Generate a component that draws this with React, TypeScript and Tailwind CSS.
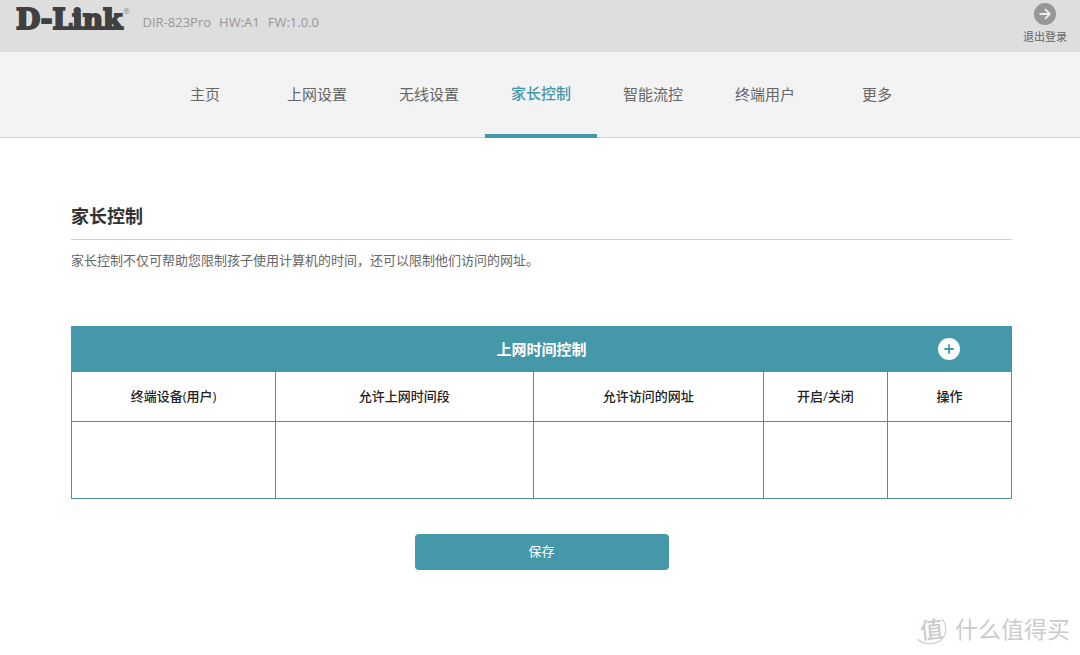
const navItems = ['主页', '上网设置', '无线设置', '家长控制', '智能流控', '终端用户', '更多'];
const activeItem = '家长控制';

const columns = [
  { label: '终端设备(用户)', width: 'w-[21.7%]' },
  { label: '允许上网时间段', width: 'w-[27.4%]' },
  { label: '允许访问的网址', width: 'w-[24.5%]' },
  { label: '开启/关闭', width: 'w-[13.2%]' },
  { label: '操作', width: 'w-[13.2%]' },
];

function Header() {
  return (
    <header className="flex h-[52px] items-start justify-between bg-[#dedede] pr-[13px] pl-4">
      <div className="flex">
        <a href="#home" className="flex font-['DejaVu_Serif',serif] font-bold text-[#404040]">
          <span className="text-[28px] leading-10 [-webkit-text-stroke:2px_#404040]">D-Link</span>
          <sup className="top-0 pt-2 text-[8px] leading-2 font-normal text-[#777777]">®</sup>
        </a>
        <p className="flex gap-2 pt-3 pl-3 text-[13px] leading-5 text-[#979797]">
          <span>DIR-823Pro</span>
          <span>HW:A1</span>
          <span>FW:1.0.0</span>
        </p>
      </div>
      <button type="button" className="flex flex-col items-center pt-[3px] text-[11px] leading-4 text-[#666666]">
        <svg viewBox="0 0 22 22" className="mb-1 size-[22px]" aria-hidden="true">
          <circle cx="11" cy="11" r="11" fill="#979797" />
          <path d="M5.500 11h10.500M11 6.2 15.800 11l-4.800 4.800" fill="none" stroke="#eeeeee" strokeWidth="1.8" />
        </svg>
        退出登录
      </button>
    </header>
  );
}

function Navigation() {
  return (
    <nav className="flex h-[86px] justify-center border-b border-[#d2d2d2] bg-[#f3f3f3] pl-0.5">
      {navItems.map((item) => (
        <a
          key={item}
          href={`#${item}`}
          aria-current={item === activeItem ? 'page' : undefined}
          className={
            item === activeItem
              ? '-mb-px flex w-28 items-center justify-center border-b-4 border-[#4598a9] text-[15px] font-medium text-[#4598a9]'
              : 'flex w-28 items-center justify-center text-[15px] text-[#666666]'
          }
        >
          {item}
        </a>
      ))}
    </nav>
  );
}

function ScheduleTable() {
  return (
    <table className="w-full table-fixed border-collapse border border-[#4f91a0]">
      <colgroup>
        {columns.map((column) => (
          <col key={column.label} className={column.width} />
        ))}
      </colgroup>
      <thead>
        <tr className="h-[45px] bg-[#4598a9] text-white">
          <th colSpan={5} className="border border-[#4598a9] p-0">
            <div className="grid grid-cols-[13.2%_1fr_13.2%] items-center">
              <span className="col-start-2 text-[15px] font-bold">上网时间控制</span>
              <button type="button" aria-label="添加" className="justify-self-center">
                <svg viewBox="0 0 22 22" className="size-[22px]" aria-hidden="true">
                  <circle cx="11" cy="11" r="11" fill="#ffffff" />
                  <path d="M6.3 11h9.4M11 6.3v9.4" stroke="#4598a9" strokeWidth="1.8" />
                </svg>
              </button>
            </div>
          </th>
        </tr>
        <tr className="h-[50px]">
          {columns.map((column) => (
            <th key={column.label} className="border border-[#4f91a0] p-0 text-[13px] font-medium text-[#222222]">
              {column.label}
            </th>
          ))}
        </tr>
      </thead>
      <tbody>
        <tr className="h-[77px]">
          {columns.map((column) => (
            <td key={column.label} className="border border-[#4f91a0]" />
          ))}
        </tr>
      </tbody>
    </table>
  );
}

function Watermark() {
  return (
    <div className="pointer-events-none absolute right-2.5 bottom-2.5 flex items-center gap-2 text-[#cccccc]">
      <div className="relative flex size-8 items-center justify-center">
        <svg viewBox="0 0 32 32" className="absolute size-8" fill="none" stroke="#cccccc" aria-hidden="true">
          <path d="M27 6C32.500 13 32 22 25.500 27.200C19 32.200 8.500 32 2.500 26" strokeWidth="1.2" />
        </svg>
        <span className="-rotate-6 text-[23px] leading-8 font-medium">值</span>
      </div>
      <span className="text-[23px] leading-8">什么值得买</span>
    </div>
  );
}

export default function App() {
  return (
    <div className="relative min-h-screen bg-white font-['Open_Sans','Noto_Sans_CJK_SC',sans-serif]">
      <Header />
      <Navigation />
      <main className="pt-16 pr-[68px] pl-[71px]">
        <h1 className="border-b border-[#d0d0d0] pb-[9px] text-[18px] leading-7 font-bold text-[#333333]">家长控制</h1>
        <p className="pt-2.5 pb-14 text-[13px] leading-5 text-[#666666]">
          家长控制不仅可帮助您限制孩子使用计算机的时间，还可以限制他们访问的网址。
        </p>
        <ScheduleTable />
        <div className="flex justify-center pt-[35px]">
          <button type="button" className="h-9 w-[254px] rounded bg-[#4598a9] text-[13px] text-white">
            保存
          </button>
        </div>
      </main>
      <Watermark />
    </div>
  );
}
